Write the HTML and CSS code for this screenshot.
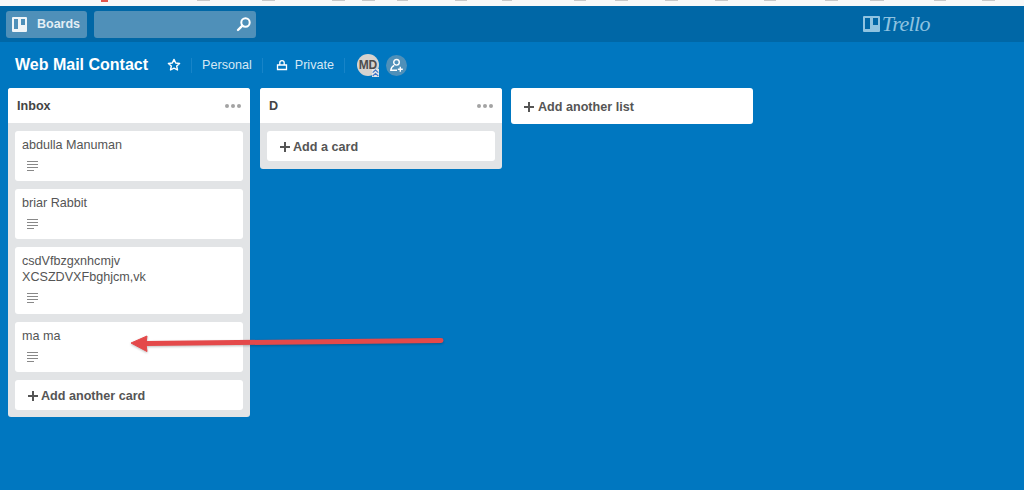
FILE: index.html
```html
<!DOCTYPE html>
<html lang="en">
<head>
    <meta charset="UTF-8">
    <title>Web Mail Contact | Trello</title>
    <link rel="stylesheet" href="styles.css">
</head>
<body>

    <div class="topstrip"></div>

    <header class="header">
        <div class="header-left">
            <a class="boards-btn">
                <svg class="logo-mark" width="17" height="17" viewBox="0 0 17 17"><path fill="#f0f5f8" fill-rule="evenodd" d="M2 1h13a1 1 0 0 1 1 1v13a1 1 0 0 1-1 1H2a1 1 0 0 1-1-1V2a1 1 0 0 1 1-1zm1 2v10h4V3zm7 0v6h4V3z"/></svg>
                <span>Boards</span>
            </a>
            <div class="search">
                <svg width="16" height="16" viewBox="0 0 16 16"><circle cx="9.500" cy="6.500" r="4.200" fill="none" stroke="#fff" stroke-width="2"/><path d="M6.400 9.600 2 14" stroke="#fff" stroke-width="2.400" stroke-linecap="round"/></svg>
            </div>
        </div><!--header-left-->
        <div class="brand">
            <svg width="17" height="16" viewBox="0 0 17 16"><path fill="#8fc3e0" fill-rule="evenodd" d="M1 0h15a1 1 0 0 1 1 1v14a1 1 0 0 1-1 1H1a1 1 0 0 1-1-1V1a1 1 0 0 1 1-1zm1 2v11h5V2zm8 0v7h5V2z"/></svg>
            <span>Trello</span>
        </div><!--brand-->
    </header>

    <div class="board-bar">
        <h1 class="board-title">Web Mail Contact</h1>
        <svg class="star" width="14" height="14" viewBox="0 0 14 14"><path fill="none" stroke="#fff" stroke-width="1.400" stroke-linejoin="round" d="M7 1.400 8.700 5l3.900.5-2.900 2.600.8 3.900L7 10.100 3.500 12l.8-3.900L1.400 5.500 5.300 5z"/></svg>
        <span class="divider"></span>
        <span class="bar-text">Personal</span>
        <span class="divider"></span>
        <svg class="lock" width="12" height="12" viewBox="0 0 12 12"><path fill="none" stroke="#fff" stroke-width="1.300" d="M1.500 6h9v4.500h-9zM3.800 6V3.800a2.200 2.200 0 0 1 4.400 0V6"/></svg>
        <span class="bar-text">Private</span>
        <span class="divider"></span>
        <div class="avatar">
            <span>MD</span>
            <svg class="avatar-badge" width="7" height="8" viewBox="0 0 7 8"><path fill="none" stroke="#3f74c8" stroke-width="1.100" d="M.7 3.600 3.500 1l2.800 2.600M.7 7 3.500 4.400 6.300 7"/></svg>
        </div>
        <div class="invite">
            <svg width="15" height="15" viewBox="0 0 15 15"><circle cx="7.500" cy="4.300" r="2.800" fill="none" stroke="#fff" stroke-width="1.400"/><path fill="none" stroke="#fff" stroke-width="1.400" d="M5.200 7.300C3.300 8.300 2 9.900 1.800 12.300H8M11.300 8.800v5M8.800 11.300h5"/></svg>
        </div>
    </div><!--board-bar-->

    <main class="board">

        <section class="list">
            <div class="list-head">
                <h2>Inbox</h2>
                <span class="dots"><i></i><i></i><i></i></span>
            </div>
            <div class="list-body">
                <div class="card">
                    <p>abdulla Manuman</p>
                    <span class="desc-icon"><i></i><i></i><i></i><i></i></span>
                </div>
                <div class="card">
                    <p>briar Rabbit</p>
                    <span class="desc-icon"><i></i><i></i><i></i><i></i></span>
                </div>
                <div class="card card-tall">
                    <p>csdVfbzgxnhcmjv<br>XCSZDVXFbghjcm,vk</p>
                    <span class="desc-icon"><i></i><i></i><i></i><i></i></span>
                </div>
                <div class="card">
                    <p>ma ma</p>
                    <span class="desc-icon"><i></i><i></i><i></i><i></i></span>
                </div>
                <a class="add-card"><b class="plus"></b>Add another card</a>
            </div>
        </section><!--list-->

        <section class="list">
            <div class="list-head">
                <h2>D</h2>
                <span class="dots"><i></i><i></i><i></i></span>
            </div>
            <div class="list-body list-body-short">
                <a class="add-card"><b class="plus"></b>Add a card</a>
            </div>
        </section><!--list-->

        <a class="add-list"><b class="plus"></b>Add another list</a>

    </main>

    <svg class="arrow" width="320" height="26" viewBox="0 0 320 26">
        <path d="M16 13.500 311 10.500" stroke="#e4494a" stroke-width="5" stroke-linecap="round"/>
        <path d="M1 13 17 6l-1 7.500 1 8z" fill="#e4494a" stroke="#e4494a" stroke-linejoin="round"/>
    </svg>

</body>
</html>
```

FILE: styles.css
```css
*{
    margin:0;
    padding:0;
    box-sizing:border-box;
}

body{
    height:490px;
    overflow:hidden;
    background-color:#0077c0;
    font-family:"Liberation Sans",Arial,sans-serif;
    color:#555;
    position:relative;
}

/* cut off browser toolbar above the page */
.topstrip{
    --mark:linear-gradient(#c8c8c8,#c8c8c8);
    height:6px;
    background-color:#f7f8f8;
    background-image:
        linear-gradient(#e2574c,#e2574c),
        var(--mark),var(--mark),var(--mark),var(--mark),
        var(--mark),var(--mark),var(--mark),var(--mark),
        var(--mark),var(--mark),var(--mark),var(--mark),
        var(--mark),var(--mark),var(--mark),var(--mark);
    background-repeat:no-repeat;
    background-size:7px 2px,13px 1px,13px 1px,13px 1px,11px 1px,12px 1px,10px 1px,12px 1px,13px 1px,13px 1px,13px 1px,12px 1px,13px 1px,14px 1px,12px 1px,13px 1px,13px 1px;
    background-position:101px 0,197px 0,262px 0,332px 0,397px 0,455px 0,502px 0,574px 0,615px 0,665px 0,715px 0,764px 0,825px 0,870px 0,934px 0,982px 0,362px 0;
}

.header{
    height:36px;
    background-color:#0067a6;
    display:flex;
    justify-content:space-between;
    align-items:center;
    padding:0 94px 0 6px;
}
.header-left{
    display:flex;
    gap:7px;
}
.boards-btn{
    width:81px;
    height:27px;
    border-radius:3px;
    background-color:#4f90b9;
    color:#e3eef5;
    font-size:12.5px;
    font-weight:bold;
    display:flex;
    align-items:center;
    padding-left:5px;
    gap:9px;
}
.search{
    width:162px;
    height:27px;
    border-radius:3px;
    background-color:#4f90b9;
    display:flex;
    justify-content:flex-end;
    align-items:center;
    padding-right:4px;
}
.brand{
    display:flex;
    align-items:center;
    gap:2px;
    color:#8fc3e0;
    font-family:"Liberation Serif",serif;
    font-style:italic;
    font-size:22px;
    letter-spacing:-.6px;
}

.board-bar{
    height:46px;
    display:flex;
    align-items:center;
    padding-left:15px;
    color:#fff;
}
.board-title{
    font-size:16px;
    font-weight:bold;
    margin-right:19px;
}
.star{
    margin-right:10px;
}
.divider{
    width:1px;
    height:15px;
    background-color:#1784c8;
}
.bar-text{
    font-size:12.6px;
    color:#d5e8f4;
}
.divider + .bar-text{
    margin:0 10px;
}
.lock{
    margin:0 7px 0 13px;
}
.lock + .bar-text{
    margin-right:10px;
}
.avatar{
    width:22px;
    height:22px;
    border-radius:50%;
    background-color:#d6d3cf;
    color:#4d4d4d;
    font-size:12px;
    font-weight:bold;
    display:flex;
    justify-content:center;
    align-items:center;
    margin:0 7px 0 12px;
    position:relative;
}
.avatar-badge{
    position:absolute;
    right:0;
    bottom:-1px;
    background-color:#e6e6e6;
}
.invite{
    width:21px;
    height:21px;
    border-radius:50%;
    background-color:#4f90b9;
    display:flex;
    justify-content:center;
    align-items:center;
}

.board{
    display:flex;
    align-items:flex-start;
    padding:0 0 0 8px;
    gap:10px;
}
.list{
    width:242px;
    border-radius:3px;
    background-color:#e2e4e6;
    overflow:hidden;
}
.list-head{
    height:35px;
    background-color:#fff;
    display:flex;
    justify-content:space-between;
    align-items:center;
    padding:0 9px;
}
.list-head h2{
    font-size:12.6px;
    font-weight:bold;
    color:#444;
}
.dots{
    display:flex;
    gap:2px;
}
.dots i{
    width:4px;
    height:4px;
    border-radius:50%;
    background-color:#a3a3a3;
}
.list-body{
    padding:8px 7px 7px;
    display:flex;
    flex-direction:column;
    gap:8px;
}
.list-body-short{
    padding-bottom:8px;
}
.card{
    background-color:#fff;
    border-radius:3px;
    padding:6px 7px 0;
    height:50px;
}
.card-tall{
    height:67px;
}
.card p{
    font-size:12.6px;
    line-height:16px;
}
.desc-icon{
    display:flex;
    flex-direction:column;
    gap:2px;
    width:11px;
    margin:8px 0 0 5px;
}
.desc-icon i{
    height:1px;
    background-color:#888;
}
.desc-icon i:last-child{
    width:7px;
}
.add-card{
    height:30px;
    background-color:#fff;
    border-radius:3px;
    display:flex;
    align-items:center;
    padding:1px 0 0 13px;
    font-size:12.6px;
    font-weight:bold;
}
.add-list{
    width:242px;
    height:36px;
    margin-left:-1px;
    background-color:#fff;
    border-radius:3px;
    display:flex;
    align-items:center;
    padding:1px 0 0 13px;
    font-size:12.6px;
    font-weight:bold;
}
.plus{
    width:10px;
    height:10px;
    margin-right:3px;
    background:
        linear-gradient(#555,#555) center/10px 2px no-repeat,
        linear-gradient(#555,#555) center/2px 10px no-repeat;
}
.add-list .plus{
    margin-right:4px;
}

/* annotation drawn over the screenshot */
.arrow{
    position:absolute;
    left:130px;
    top:330px;
    filter:drop-shadow(0 1px 1px rgba(0,0,0,.25));
}
```
